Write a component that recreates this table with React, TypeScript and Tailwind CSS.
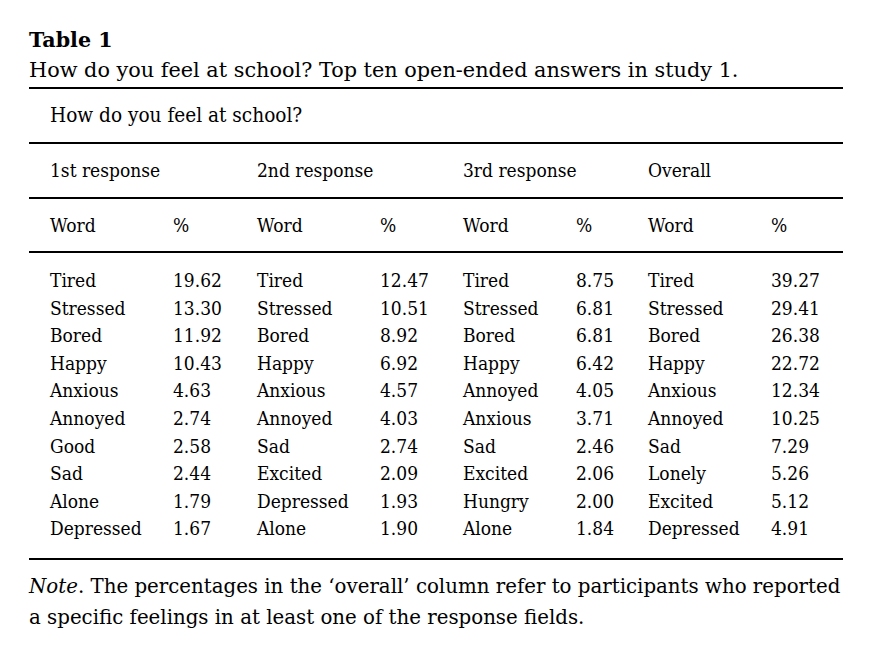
import React from 'react';

const rows: [string, string, string, string, string, string, string, string][] = [
  ['Tired', '19.62', 'Tired', '12.47', 'Tired', '8.75', 'Tired', '39.27'],
  ['Stressed', '13.30', 'Stressed', '10.51', 'Stressed', '6.81', 'Stressed', '29.41'],
  ['Bored', '11.92', 'Bored', '8.92', 'Bored', '6.81', 'Bored', '26.38'],
  ['Happy', '10.43', 'Happy', '6.92', 'Happy', '6.42', 'Happy', '22.72'],
  ['Anxious', '4.63', 'Anxious', '4.57', 'Annoyed', '4.05', 'Anxious', '12.34'],
  ['Annoyed', '2.74', 'Annoyed', '4.03', 'Anxious', '3.71', 'Annoyed', '10.25'],
  ['Good', '2.58', 'Sad', '2.74', 'Sad', '2.46', 'Sad', '7.29'],
  ['Sad', '2.44', 'Excited', '2.09', 'Excited', '2.06', 'Lonely', '5.26'],
  ['Alone', '1.79', 'Depressed', '1.93', 'Hungry', '2.00', 'Excited', '5.12'],
  ['Depressed', '1.67', 'Alone', '1.90', 'Alone', '1.84', 'Depressed', '4.91'],
];

const cols = 'grid grid-cols-[123px_84px_123px_83px_113px_72px_123px_72px] pl-[21px]';

const App: React.FC = () => {
  return (
    <div className="w-[876px] h-[659px] bg-white text-black pl-[29px] pt-[25px] font-['DejaVu_Serif',serif]">
      <p className="text-[20.6px] font-bold leading-[30px]">Table 1</p>
      <p className="text-[20.8px] leading-[30px]">How do you feel at school? Top ten open-ended answers in study 1.</p>

      <div className="w-[814px] mt-[2px] border-t-2 border-b-2 border-black text-[19px] font-stretch-condensed">
        {/* question */}
        <div className="h-[53px] pl-[21px] flex items-center text-[20.6px]">How do you feel at school?</div>

        {/* response groups */}
        <div className={`${cols} h-[55px] items-center border-t-2 border-black`}>
          <span className="col-span-2">1st response</span>
          <span className="col-span-2">2nd response</span>
          <span className="col-span-2">3rd response</span>
          <span className="col-span-2">Overall</span>
        </div>

        {/* column labels */}
        <div className={`${cols} h-[56px] items-center border-t-2 border-b-2 border-black`}>
          {[0, 1, 2, 3].map(i => (
            <React.Fragment key={i}>
              <span>Word</span>
              <span>%</span>
            </React.Fragment>
          ))}
        </div>

        {/* data */}
        <div className="pt-[13px] pb-[16px]">
          {rows.map((r, i) => (
            <div key={i} className={`${cols} h-[27.6px] items-center`}>
              {r.map((c, j) => (
                <span key={j}>{c}</span>
              ))}
            </div>
          ))}
        </div>
      </div>

      <p className="mt-[11px] text-[19.8px] leading-[31px] w-[816px]">
        <i>Note</i>. The percentages in the ‘overall’ column refer to participants who reported a specific feelings in at least one of the response fields.
      </p>
    </div>
  );
};

export default App;
